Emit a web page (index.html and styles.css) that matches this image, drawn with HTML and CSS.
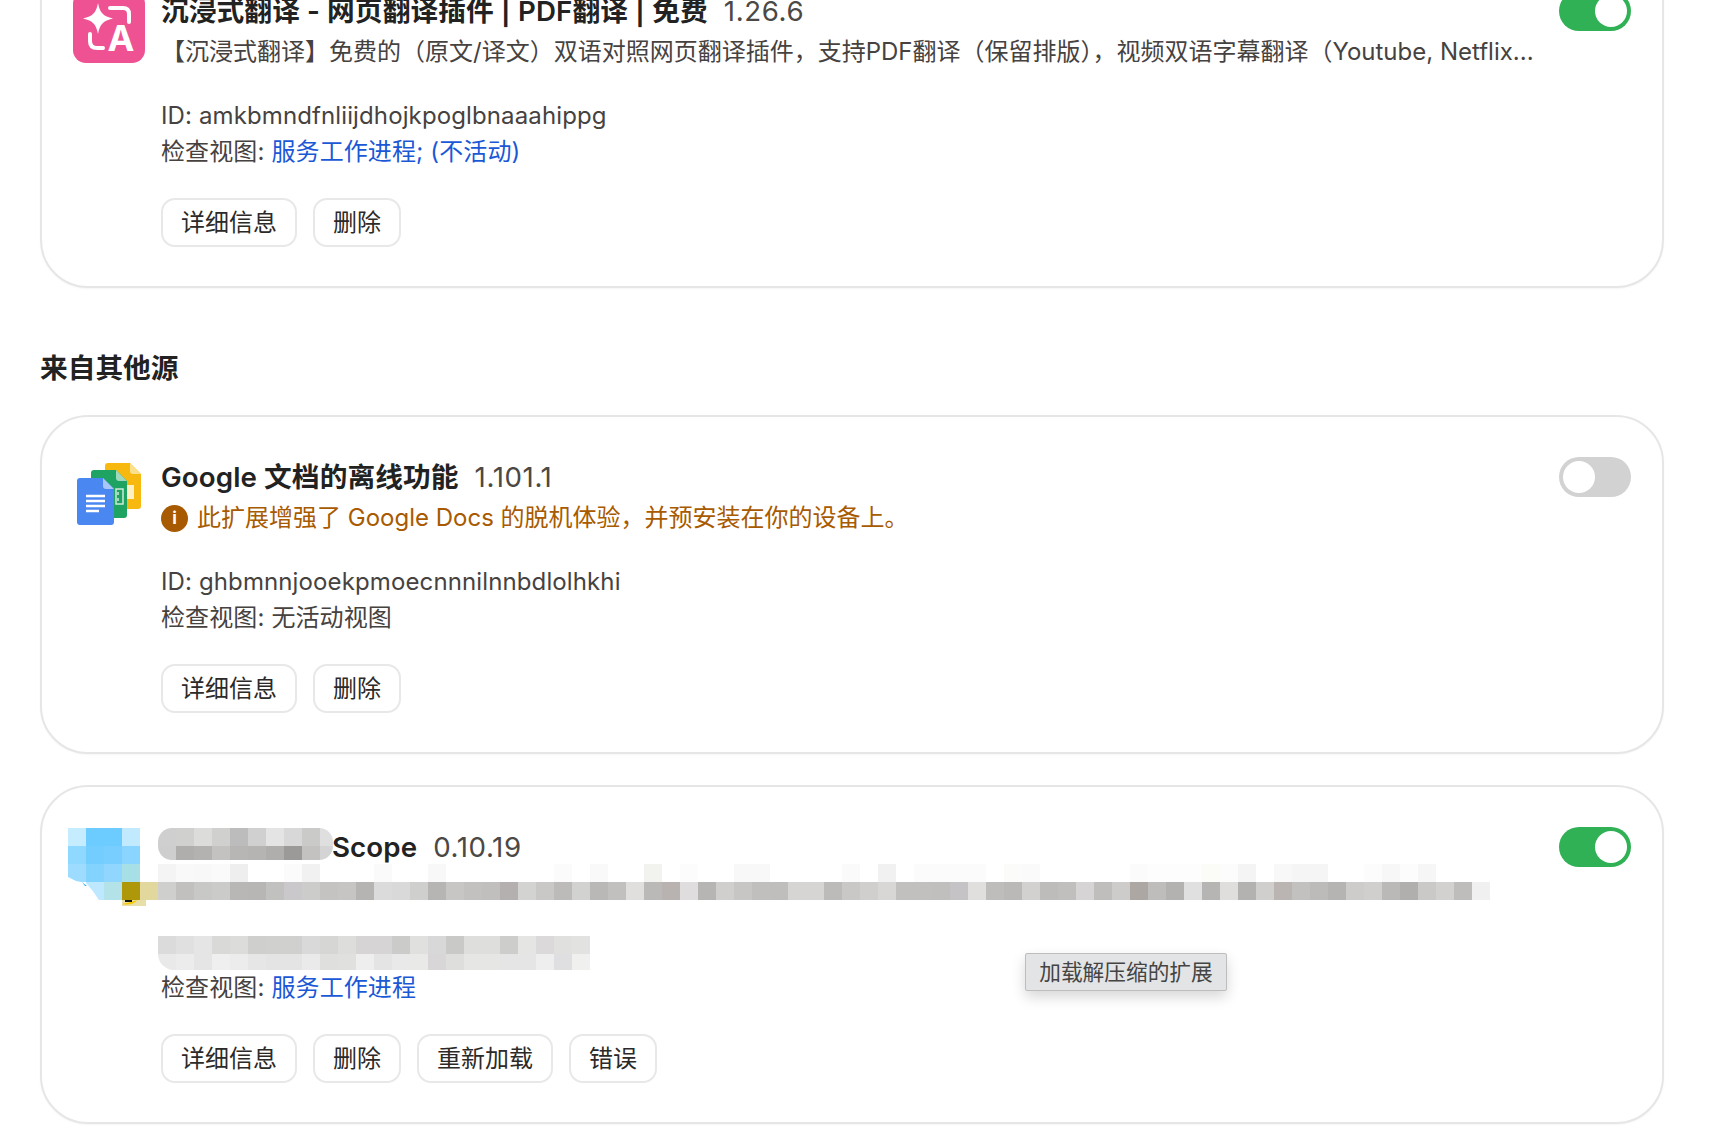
FILE: index.html
```html
<!DOCTYPE html>
<html lang="zh-CN">
<head>
    <meta charset="UTF-8">
    <title>扩展程序</title>
    <link rel="stylesheet" href="styles.css">
</head>
<body>
    <div class="page">
        <!-- Chrome应用商店的扩展 -->
        <div class="card">
            <div class="icon">
                <svg width="72" height="72" viewBox="0 0 72 72">
                    <rect width="72" height="72" rx="13" fill="#ef5292"/>
                    <path d="M25 12C27 22 30 25 40 27.500C30 30 27 33 25 43C23 33 20 30 10 27.500C20 25 23 22 25 12Z" fill="#fff"/>
                    <path d="M37 17H50Q56 17 56 23V31M17 43V50Q17 57 24 57H30" fill="none" stroke="#fff" stroke-width="4" stroke-linecap="round"/>
                    <text x="48" y="60" class="logo-letter">A</text>
                </svg>
            </div>
            <div class="content">
                <div class="title"><span class="name">沉浸式翻译 - 网页翻译插件 | PDF翻译 | 免费</span><span class="version">1.26.6</span></div>
                <div class="desc">【沉浸式翻译】免费的（原文/译文）双语对照网页翻译插件，支持PDF翻译（保留排版），视频双语字幕翻译（Youtube, Netflix...</div>
                <div class="meta">
                    <div>ID: amkbmndfnliijdhojkpoglbnaaahippg</div>
                    <div>检查视图: <a class="link">服务工作进程; (不活动)</a></div>
                </div>
                <div class="actions">
                    <button>详细信息</button>
                    <button>删除</button>
                </div>
            </div>
            <div class="toggle on"><span class="knob"></span></div>
        </div>

        <h2 class="section-title">来自其他源</h2>

        <div class="card">
            <div class="icon">
                <svg width="72" height="72" viewBox="0 0 72 72">
                    <path d="M35 6H57L68 17V49Q68 52 65 52H35Q32 52 32 49V9Q32 6 35 6Z" fill="#f7b90f"/>
                    <path d="M57 6L68 17H60Q57 17 57 14Z" fill="#fbe08c"/>
                    <rect x="52" y="28" width="9" height="14" fill="#fdf0c4"/>
                    <path d="M21 13H43L54 24V58Q54 61 51 61H21Q18 61 18 58V16Q18 13 21 13Z" fill="#1ea362"/>
                    <path d="M43 13L54 24H46Q43 24 43 21Z" fill="#9fd8bc"/>
                    <path d="M43 32H50V47H43ZM45 35V38M45 41V44" fill="none" stroke="#cdebdc" stroke-width="1.500"/>
                    <path d="M7 21H30L41 32V65Q41 68 38 68H7Q4 68 4 65V24Q4 21 7 21Z" fill="#4a87f0"/>
                    <path d="M30 21L41 32H33Q30 32 30 29Z" fill="#a8c6f9"/>
                    <path d="M13 39H32M13 44H32M13 49H32M13 54H26" stroke="#fff" stroke-width="2.400"/>
                </svg>
            </div>
            <div class="content">
                <div class="title"><span class="name">Google 文档的离线功能</span><span class="version">1.101.1</span></div>
                <div class="desc warning">
                    <span class="info-icon">i</span>此扩展增强了 Google Docs 的脱机体验，并预安装在你的设备上。
                </div>
                <div class="meta">
                    <div>ID: ghbmnnjooekpmoecnnnilnnbdlolhkhi</div>
                    <div>检查视图: 无活动视图</div>
                </div>
                <div class="actions">
                    <button>详细信息</button>
                    <button>删除</button>
                </div>
            </div>
            <div class="toggle"><span class="knob"></span></div>
        </div>

        <!-- 打码的开发者扩展 -->
        <div class="card">
            <div class="icon">
                <svg class="icon-mosaic" width="72" height="72" viewBox="0 0 72 72">
                    <g class="tiles">
                        <rect x="-5" y="2" fill="#c6ecff"/><rect x="13" y="2" fill="#6ccbff"/><rect x="31" y="2" fill="#6ccbff"/><rect x="49" y="2" fill="#c2eaff"/>
                        <rect x="-5" y="20" fill="#8fd8ff"/><rect x="13" y="20" fill="#73cdff"/><rect x="31" y="20" fill="#78ceff"/><rect x="49" y="20" fill="#8ad5ff"/>
                        <rect x="-5" y="38" fill="#9ddcff"/><rect x="13" y="38" fill="#83d3ff"/><rect x="31" y="38" fill="#90d6ff"/><rect x="49" y="38" fill="#a6dfe6"/>
                        <rect x="13" y="56" fill="#bde8ff"/><rect x="31" y="56" fill="#b3e3e8"/><rect x="49" y="56" fill="#ae9708"/><rect x="67" y="56" fill="#e2d79c"/>
                    </g>
                    <path d="M-5 51L3 55L13 57L19 64L26 74H-5Z" fill="#fff"/>
                    <path d="M9 56L14 60L12 60Z" fill="#3aaef5"/>
                    <rect x="49" y="74" width="24" height="6" fill="#e8dfa8"/>
                    <path d="M49 78Q60 80 64 74L58 76Z" fill="#f4c800"/>
                    <rect x="52" y="74" width="7" height="2" fill="#111"/>
                </svg>
            </div>
            <div class="content">
                <div class="title">
                    <svg class="blur-name" width="175" height="32">
                        <g class="tiles">
                            <rect x="0" fill="#cfcfcf"/><rect x="18" fill="#d0d0ce"/><rect x="36" fill="#dcdcda"/><rect x="54" fill="#d0d0ce"/><rect x="72" fill="#bcbcbc"/><rect x="90" fill="#d0d0d0"/><rect x="108" fill="#e4e4e4"/><rect x="126" fill="#d8d8d8"/><rect x="144" fill="#cacac8"/><rect x="162" fill="#dfdfdf"/>
                        </g>
                        <g class="tiles" transform="translate(0 18)">
                            <rect x="0" fill="#cecece"/><rect x="18" fill="#b0aeac"/><rect x="36" fill="#b4b2b0"/><rect x="54" fill="#c4c2c0"/><rect x="72" fill="#b8b6b4"/><rect x="90" fill="#b6b4b2"/><rect x="108" fill="#b0aeac"/><rect x="126" fill="#9c9a98"/><rect x="144" fill="#c4c2c0"/><rect x="162" fill="#d4d4d4"/>
                        </g>
                    </svg><span class="name">Scope</span><span class="version">0.10.19</span>
                </div>
                <div class="desc blank">
                    <svg class="blur-desc" width="1334" height="36">
                        <g class="tiles">
                            <rect x="0" fill="#f4f4f4"/><rect x="18" fill="#f9f9f9"/><rect x="36" fill="#f8f8f8"/><rect x="54" fill="#fafafa"/><rect x="72" fill="#eeeeee"/><rect x="126" fill="#fbfbfb"/><rect x="144" fill="#f1f1f1"/><rect x="216" fill="#fafafa"/><rect x="270" fill="#f8f8f8"/><rect x="396" fill="#fbfbfb"/><rect x="432" fill="#f9f9f9"/><rect x="486" fill="#f2f2ef"/><rect x="522" fill="#fcfcfc"/><rect x="576" fill="#f8f8f8"/><rect x="594" fill="#f8f8f8"/><rect x="684" fill="#fafafa"/><rect x="720" fill="#f1f1f1"/><rect x="756" fill="#fbfbfb"/><rect x="774" fill="#fbfbfb"/><rect x="792" fill="#fbfbfb"/><rect x="810" fill="#fbfbfb"/><rect x="846" fill="#fbfbf9"/><rect x="864" fill="#fafafa"/><rect x="972" fill="#fbfbfb"/><rect x="990" fill="#fdfdfd"/><rect x="1008" fill="#fdfdfd"/><rect x="1026" fill="#fdfdfd"/><rect x="1044" fill="#fbfbf8"/><rect x="1062" fill="#fcfcfc"/><rect x="1080" fill="#f4f4f4"/><rect x="1116" fill="#f8f8f8"/><rect x="1134" fill="#f5f5f5"/><rect x="1152" fill="#f5f5f5"/><rect x="1206" fill="#fcfcfc"/><rect x="1224" fill="#f7f7f7"/><rect x="1242" fill="#fcfcfc"/><rect x="1260" fill="#f6f6f6"/>
                        </g>
                        <g class="tiles" transform="translate(0 18)">
                            <rect x="0" fill="#cfcfcd"/><rect x="18" fill="#c2c0be"/><rect x="36" fill="#c8c8c6"/><rect x="54" fill="#cbcbc9"/><rect x="72" fill="#b9b7b5"/><rect x="90" fill="#b8b6b4"/><rect x="108" fill="#c1c1bf"/><rect x="126" fill="#cac8ca"/><rect x="144" fill="#cccccb"/><rect x="162" fill="#c4c3c1"/><rect x="180" fill="#c6c5c3"/><rect x="198" fill="#b5b4b2"/><rect x="216" fill="#dbdbdb"/><rect x="234" fill="#d9d9d9"/><rect x="252" fill="#cfcfcd"/><rect x="270" fill="#b6b5b3"/><rect x="288" fill="#c7c6c4"/><rect x="306" fill="#c2c1bf"/><rect x="324" fill="#c0bfbd"/><rect x="342" fill="#b4b0b0"/><rect x="360" fill="#d3d3d1"/><rect x="378" fill="#c9c8c6"/>
                            <rect x="396" fill="#bdbbb9"/><rect x="414" fill="#d2d2d0"/><rect x="432" fill="#b9b8b6"/><rect x="450" fill="#c1c0be"/><rect x="468" fill="#e0dfdd"/><rect x="486" fill="#bbb9b7"/><rect x="504" fill="#b8b3b1"/><rect x="522" fill="#dfdddd"/><rect x="540" fill="#b6b5b3"/><rect x="558" fill="#d0cfcd"/><rect x="576" fill="#c7c6c4"/><rect x="594" fill="#c0bfbd"/><rect x="612" fill="#bfbebc"/><rect x="630" fill="#d6d5d3"/><rect x="648" fill="#d6d5d3"/><rect x="666" fill="#bcbbb9"/><rect x="684" fill="#c9c8c6"/><rect x="702" fill="#d0cfcd"/><rect x="720" fill="#d8d7d5"/><rect x="738" fill="#c1c0be"/><rect x="756" fill="#c1c0be"/><rect x="774" fill="#c0bfbd"/><rect x="792" fill="#c5c3c5"/><rect x="810" fill="#e0dfdd"/><rect x="828" fill="#bebdbb"/><rect x="846" fill="#bab9b7"/><rect x="864" fill="#d2d1cf"/><rect x="882" fill="#bdbcba"/>
                            <rect x="900" fill="#c0bfbd"/><rect x="918" fill="#d6d4d5"/><rect x="936" fill="#bfbebc"/><rect x="954" fill="#cdccca"/><rect x="972" fill="#aca7a3"/><rect x="990" fill="#bebdbb"/><rect x="1008" fill="#b3b2b0"/><rect x="1026" fill="#e0e0e0"/><rect x="1044" fill="#b6b5b3"/><rect x="1062" fill="#dfdedc"/><rect x="1080" fill="#b3b2b0"/><rect x="1098" fill="#d0cfcd"/><rect x="1116" fill="#bab5b3"/><rect x="1134" fill="#c2c1bf"/><rect x="1152" fill="#bcbbb9"/><rect x="1170" fill="#b5b4b2"/><rect x="1188" fill="#cdccca"/><rect x="1206" fill="#d0cfcd"/><rect x="1224" fill="#bab9b7"/><rect x="1242" fill="#b0afad"/><rect x="1260" fill="#cac9c7"/><rect x="1278" fill="#d2d1cf"/><rect x="1296" fill="#bebdbb"/><rect x="1314" fill="#f0f0f0"/>
                        </g>
                    </svg>
                </div>
                <div class="meta">
                    <div class="blank">
                        <svg class="blur-id" width="432" height="34">
                            <g class="tiles">
                                <rect x="0" fill="#dbdbdb"/><rect x="18" fill="#e0e0e0"/><rect x="36" fill="#e5e5e5"/><rect x="54" fill="#d9d9d7"/><rect x="72" fill="#dcdcda"/><rect x="90" fill="#cfcfcd"/><rect x="108" fill="#d0d0ce"/><rect x="126" fill="#d0d0ce"/><rect x="144" fill="#d9d9d9"/><rect x="162" fill="#d6d6d4"/><rect x="180" fill="#dddddb"/><rect x="198" fill="#d6d4d5"/><rect x="216" fill="#d6d4d5"/><rect x="234" fill="#cbcbc9"/><rect x="252" fill="#e0e0de"/><rect x="270" fill="#d8d8d8"/><rect x="288" fill="#c9c9c7"/><rect x="306" fill="#dededc"/><rect x="324" fill="#dededc"/><rect x="342" fill="#cdcdcb"/><rect x="360" fill="#e5e5e3"/><rect x="378" fill="#dbd9da"/><rect x="396" fill="#e0e0de"/><rect x="414" fill="#e2e2e0"/>
                            </g>
                            <g class="tiles" transform="translate(0 18)">
                                <rect x="0" fill="#e9e9e9"/><rect x="18" fill="#ececec"/><rect x="36" fill="#e5e5e5"/><rect x="54" fill="#efefef"/><rect x="72" fill="#ececec"/><rect x="90" fill="#e6e6e6"/><rect x="108" fill="#e4e4e4"/><rect x="126" fill="#e4e4e4"/><rect x="144" fill="#eaeaea"/><rect x="162" fill="#dfdfdd"/><rect x="180" fill="#e0e0de"/><rect x="198" fill="#eeeeee"/><rect x="216" fill="#e4e4e4"/><rect x="234" fill="#e9e9e9"/><rect x="252" fill="#e9e9e7"/><rect x="270" fill="#d8d6d7"/><rect x="288" fill="#dededc"/><rect x="306" fill="#e6e6e4"/><rect x="324" fill="#e6e6e4"/><rect x="342" fill="#e5e5e5"/><rect x="360" fill="#e5e5e5"/><rect x="378" fill="#eeeeee"/><rect x="396" fill="#dfdfe1"/><rect x="414" fill="#f0f0ee"/>
                            </g>
                        </svg>
                    </div>
                    <div>检查视图: <a class="link">服务工作进程</a></div>
                </div>
                <div class="actions">
                    <button>详细信息</button>
                    <button>删除</button>
                    <button>重新加载</button>
                    <button>错误</button>
                </div>
            </div>
            <div class="toggle on"><span class="knob"></span></div>
        </div>
    </div>

    <div class="tooltip">加载解压缩的扩展</div>
</body>
</html>
```

FILE: styles.css
```css
* {
    box-sizing: border-box;
}

html, body {
    height: 100%;
}

body {
    margin: 0;
    overflow: hidden;
    background-color: #fff;
    color: #46423f;
    font-family: Inter, "Noto Sans CJK SC", sans-serif;
    font-size: 24px;
    line-height: 36px;
}

/* La página está desplazada: la primera tarjeta queda cortada arriba */
.page {
    margin-top: -51px;
    padding: 0 62px 0 40px;
}

.card {
    display: flex;
    align-items: flex-start;
    height: 339px;
    margin-bottom: 31px;
    padding: 40px 31px 0;
    border: 2px solid #e6e6e6;
    border-radius: 48px;
    background-color: #fff;
    box-shadow: 0 1px 2px rgba(0, 0, 0, 0.04);
}

.icon {
    flex: none;
    width: 72px;
    height: 72px;
    margin-right: 16px;
}

.icon svg {
    display: block;
    overflow: visible;
}

.icon-mosaic {
    margin-top: -1px;
}

.logo-letter {
    fill: #fff;
    font-size: 36px;
    font-weight: 700;
    text-anchor: middle;
}

.content {
    flex: 1;
    min-width: 0;
}

.title {
    display: flex;
    align-items: center;
    height: 40px;
    line-height: 40px;
    font-size: 27.7px;
    white-space: nowrap;
}

.name {
    color: #222;
    font-weight: 600;
    letter-spacing: 0.1px;
}

.version {
    margin-left: 16px;
    color: #4c4845;
    font-weight: 400;
    letter-spacing: 0.6px;
}

.desc {
    height: 36px;
    margin-top: 3px;
    white-space: nowrap;
}

.warning {
    display: flex;
    align-items: center;
    color: #a85a00;
}

.info-icon {
    display: flex;
    flex: none;
    justify-content: center;
    align-items: center;
    width: 27px;
    height: 27px;
    margin-right: 9px;
    border-radius: 50%;
    background-color: #a85a00;
    color: #fff;
    font-size: 17px;
    font-weight: 700;
    line-height: 1;
}

.meta {
    margin-top: 28px;
    letter-spacing: 0.12px;
}

.link {
    color: #1b58d6;
}

.actions {
    display: flex;
    gap: 16px;
    margin-top: 28px;
}

button {
    height: 49px;
    padding: 0 18px;
    border: 2px solid #e8e8e8;
    border-radius: 14px;
    background-color: #fff;
    color: #2c2a28;
    font: inherit;
}

.toggle {
    display: flex;
    flex: none;
    align-items: center;
    width: 72px;
    height: 40px;
    padding: 0 4px;
    border-radius: 20px;
    background-color: #d2d2d2;
}

.toggle.on {
    justify-content: flex-end;
    background-color: #30b156;
}

.knob {
    width: 32px;
    height: 32px;
    border-radius: 50%;
    background-color: #fff;
}

.section-title {
    height: 40px;
    margin: 60px 0 27px;
    color: #222;
    font-size: 27.7px;
    font-weight: 600;
    line-height: 40px;
}

/* Mosaicos que tapan el texto */
.tiles rect {
    width: 18px;
    height: 18px;
}

.blank {
    position: relative;
    height: 36px;
}

.blur-name {
    flex: none;
    margin: 0 -1px 6px -3px;
    border-radius: 14px;
}

.blur-desc {
    position: absolute;
    top: -6px;
    left: -3px;
}

.blur-id {
    position: absolute;
    top: 2px;
    left: -3px;
    border-radius: 0 0 0 16px;
}

.tooltip {
    position: absolute;
    top: 953px;
    left: 1025px;
    width: 202px;
    height: 38px;
    border: 1px solid #bdbdbd;
    border-radius: 2px;
    background-color: #e3e4e6;
    box-shadow: 0 6px 14px rgba(0, 0, 0, 0.16);
    color: #444;
    font-size: 21.7px;
    line-height: 36px;
    text-align: center;
}
```
